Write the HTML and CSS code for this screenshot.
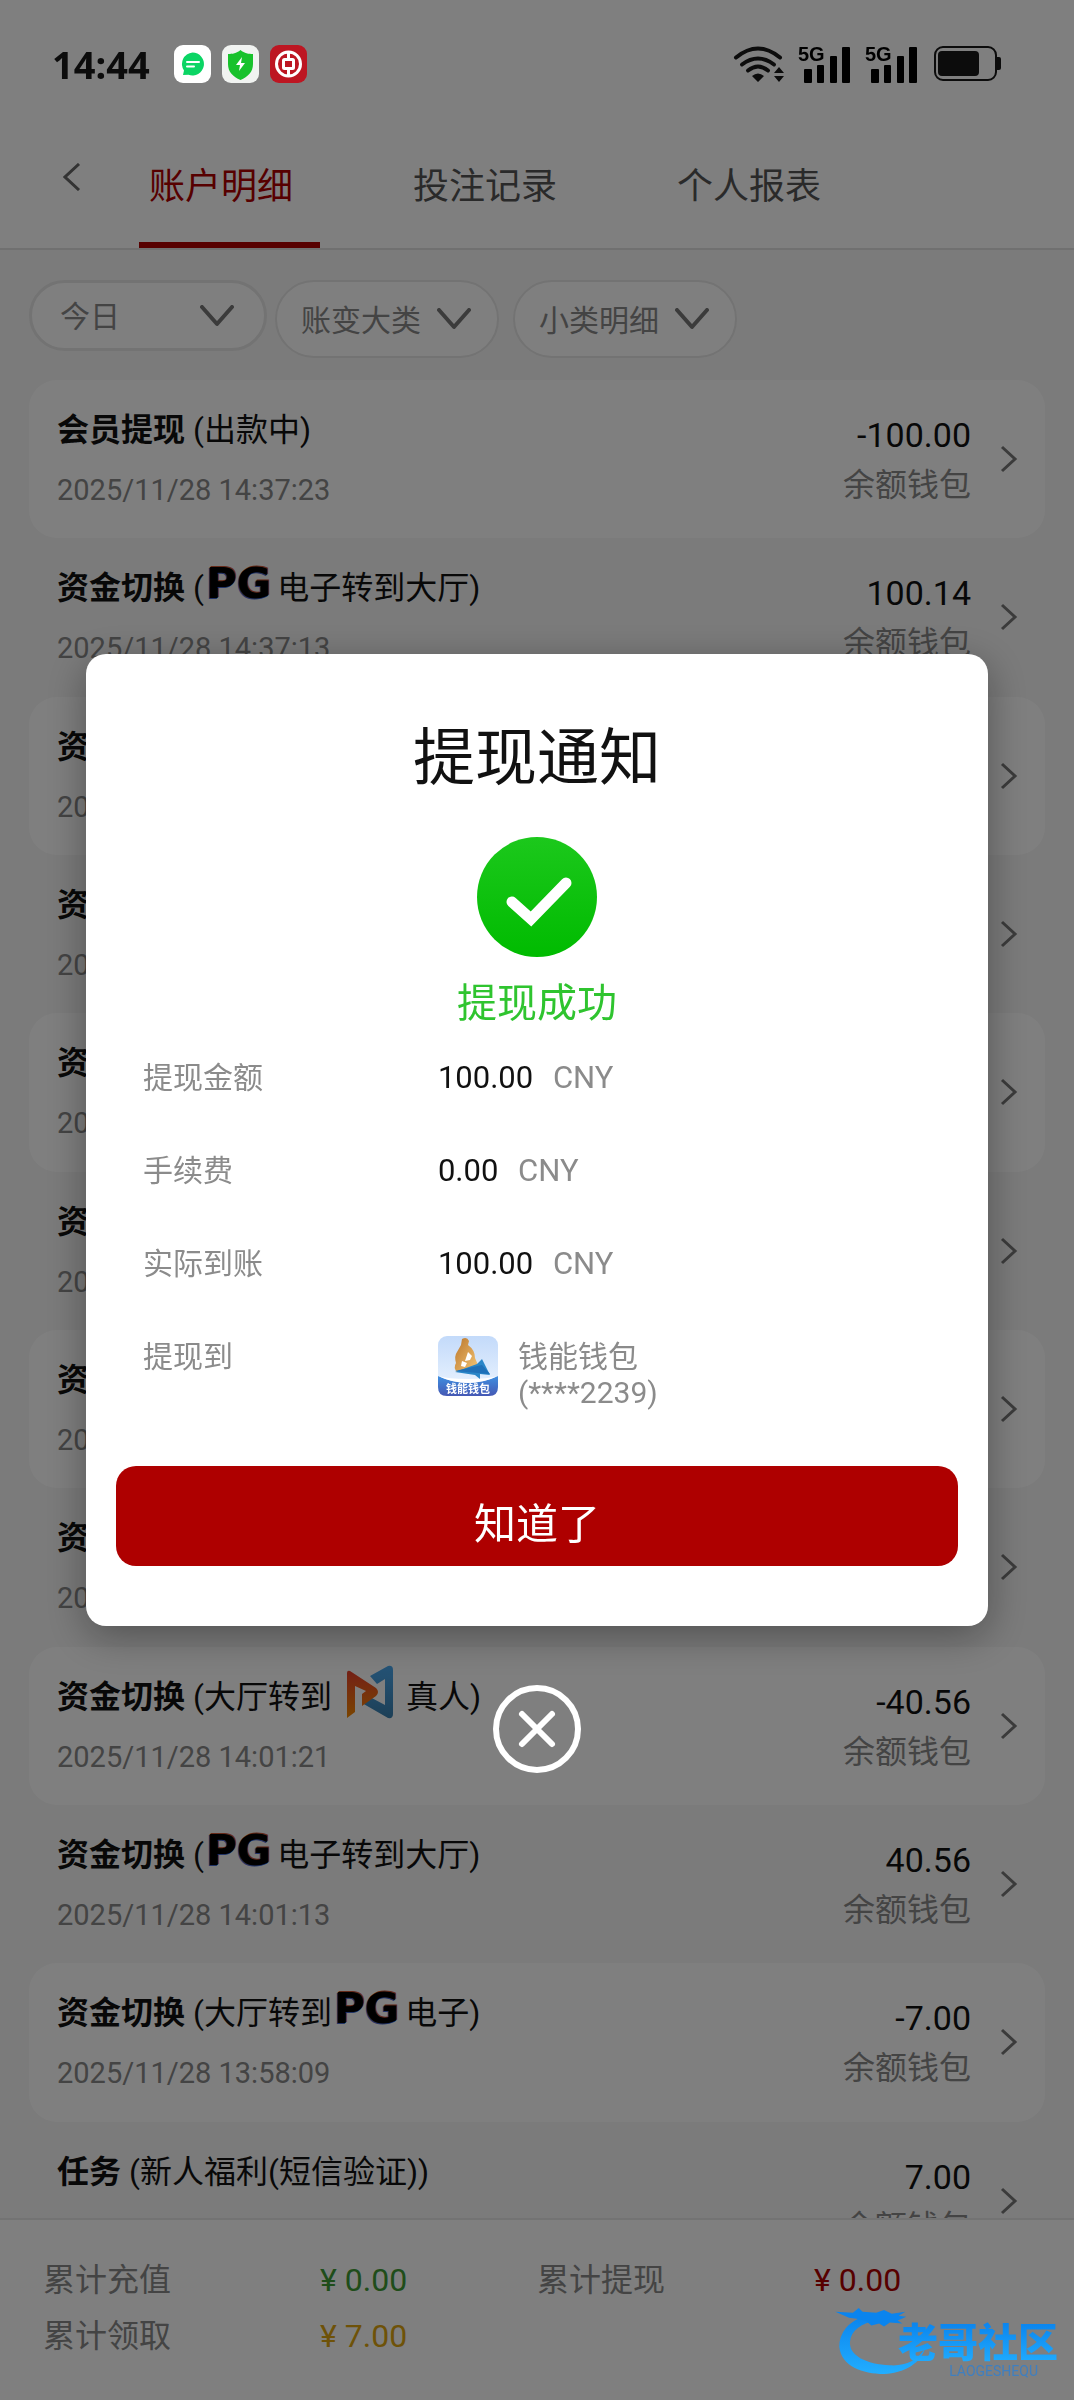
FILE: index.html
```html
<!DOCTYPE html>
<html lang="zh-CN">
<head>
    <meta charset="UTF-8">
    <meta name="viewport" content="width=device-width, initial-scale=1.0">
    <title>账户明细</title>
    <link rel="stylesheet" href="styles.css">
</head>
<body>
    <!-- Shared icons -->
    <svg width="0" height="0" class="sprite" aria-hidden="true">
        <symbol id="icon-right" viewBox="0 0 18 28"><path d="M2 2l13 12L2 26" fill="none" stroke="currentColor" stroke-width="3"/></symbol>
        <symbol id="icon-down" viewBox="0 0 34 22"><path d="M2 2l15 17L32 2" fill="none" stroke="currentColor" stroke-width="4" stroke-linejoin="round" stroke-linecap="round"/></symbol>
        <symbol id="icon-bars" viewBox="0 0 54 40">
            <rect x="6" y="25" width="8" height="14" rx="1"/>
            <rect x="19" y="21" width="7" height="18" rx="1"/>
            <rect x="32" y="12" width="7" height="27" rx="1"/>
            <rect x="44" y="3" width="8" height="36" rx="1"/>
        </symbol>
    </svg>

    <div class="app">
        <!-- Status bar -->
        <div class="status-bar">
            <span class="time">14:44</span>
            <div class="status-apps">
                <svg width="37" height="38" viewBox="0 0 37 38">
                    <rect width="37" height="38" rx="9" fill="#fff"/>
                    <path d="M18.500 7.500a11.500 11.500 0 1 1-4 22.300L9 30l1-4.500a11.500 11.500 0 0 1 8.500-18z" fill="#0bd564"/>
                    <path d="M13 17h12M13 21.500h7" stroke="#fff" stroke-width="2" stroke-linecap="round"/>
                </svg>
                <svg width="37" height="38" viewBox="0 0 37 38">
                    <rect width="37" height="38" rx="9" fill="#f1f3f1"/>
                    <path d="M18.500 5c4 3.500 8 4 12.500 4v10c0 8-5 12.500-12.500 16C11 31.500 6 27 6 19V9c4.500 0 8.500-.5 12.500-4z" fill="#18c22c"/>
                    <path d="M20 12l-6 8h4l-1 6 6-8h-4z" fill="#fff"/>
                </svg>
                <svg width="37" height="38" viewBox="0 0 37 38">
                    <rect width="37" height="38" rx="9" fill="#bd1622"/>
                    <circle cx="18.500" cy="19" r="12" fill="none" stroke="#fff" stroke-width="3"/>
                    <rect x="13.500" y="14.500" width="10" height="9" rx="1" fill="none" stroke="#fff" stroke-width="3"/>
                    <path d="M18.500 6v8M18.500 24v8" stroke="#fff" stroke-width="3"/>
                </svg>
            </div>
            <div class="status-icons">
                <svg width="52" height="38" viewBox="0 0 52 38">
                    <g fill="none" stroke="#0c0c0c" stroke-width="4" stroke-linecap="round">
                        <path d="M3 12.500q22-18 44 0"/>
                        <path d="M9 19.500q16-12 32 0"/>
                        <path d="M15 25.500q10-8 20 0"/>
                    </g>
                    <path d="M25 37l-6-6q6-5 12 0zM46 22l5 6H41zM46 37l5-6H41z" fill="#0c0c0c"/>
                </svg>
                <svg width="54" height="40"><text x="0" y="17" class="signal-text">5G</text><use href="#icon-bars"/></svg>
                <svg width="54" height="40"><text x="0" y="17" class="signal-text">5G</text><use href="#icon-bars"/></svg>
                <svg class="battery" width="68" height="36" viewBox="0 0 68 36">
                    <rect x="1" y="1" width="61" height="33" rx="8" fill="none" stroke="#0c0c0c" stroke-width="2"/>
                    <rect x="4" y="5" width="41" height="25" rx="4" fill="#0c0c0c"/>
                    <path d="M63 11h2q2 0 2 2v9q0 2-2 2h-2z" fill="#0c0c0c"/>
                </svg>
            </div>
        </div>

        <!-- Tabs -->
        <header class="header">
            <button type="button" class="back" aria-label="返回">
                <svg width="18" height="28" viewBox="0 0 18 28"><path d="M16 1L2 14l14 13" fill="none" stroke="currentColor" stroke-width="3"/></svg>
            </button>
            <nav class="tabs">
                <a href="#detail" class="tab active">账户明细</a>
                <a href="#bets" class="tab">投注记录</a>
                <a href="#report" class="tab">个人报表</a>
            </nav>
        </header>

        <!-- Filters -->
        <div class="filters">
            <div class="filter filter-date">
                <select aria-label="日期"><option>今日</option></select>
                <svg width="34" height="22"><use href="#icon-down"/></svg>
            </div>
            <div class="filter">
                <select aria-label="账变大类"><option>账变大类</option></select>
                <svg width="34" height="22"><use href="#icon-down"/></svg>
            </div>
            <div class="filter filter-last">
                <select aria-label="小类明细"><option>小类明细</option></select>
                <svg width="34" height="22"><use href="#icon-down"/></svg>
            </div>
        </div>

        <!-- Records -->
        <main class="list-wrap">
            <ul class="list">
                <li class="record">
                    <div class="info"><p class="name"><b>会员提现</b>(出款中)</p><time>2025/11/28 14:37:23</time></div>
                    <div class="money"><span class="amount">-100.00</span><span class="wallet">余额钱包</span></div>
                    <svg class="arrow" width="18" height="28"><use href="#icon-right"/></svg>
                </li>
                <li class="record">
                    <div class="info"><p class="name"><b>资金切换</b>(<span class="pg">PG</span>电子转到大厅)</p><time>2025/11/28 14:37:13</time></div>
                    <div class="money"><span class="amount">100.14</span><span class="wallet">余额钱包</span></div>
                    <svg class="arrow" width="18" height="28"><use href="#icon-right"/></svg>
                </li>
                <li class="record">
                    <div class="info"><p class="name"><b>资金切换</b></p><time>2025/11/28</time></div>
                    <svg class="arrow" width="18" height="28"><use href="#icon-right"/></svg>
                </li>
                <li class="record">
                    <div class="info"><p class="name"><b>资金切换</b></p><time>2025/11/28</time></div>
                    <svg class="arrow" width="18" height="28"><use href="#icon-right"/></svg>
                </li>
                <li class="record">
                    <div class="info"><p class="name"><b>资金切换</b></p><time>2025/11/28</time></div>
                    <svg class="arrow" width="18" height="28"><use href="#icon-right"/></svg>
                </li>
                <li class="record">
                    <div class="info"><p class="name"><b>资金切换</b></p><time>2025/11/28</time></div>
                    <svg class="arrow" width="18" height="28"><use href="#icon-right"/></svg>
                </li>
                <li class="record">
                    <div class="info"><p class="name"><b>资金切换</b></p><time>2025/11/28</time></div>
                    <svg class="arrow" width="18" height="28"><use href="#icon-right"/></svg>
                </li>
                <li class="record">
                    <div class="info"><p class="name"><b>资金切换</b></p><time>2025/11/28</time></div>
                    <svg class="arrow" width="18" height="28"><use href="#icon-right"/></svg>
                </li>
                <li class="record">
                    <div class="info">
                        <p class="name"><b>资金切换</b>(大厅转到<svg class="live-logo" width="48" height="54" viewBox="0 0 48 54">
                            <defs>
                                <linearGradient id="live-red" x1="0" y1="0" x2="0" y2="1"><stop offset="0" stop-color="#e8402c"/><stop offset="1" stop-color="#f58a00"/></linearGradient>
                                <linearGradient id="live-blue" x1="0" y1="0" x2="0" y2="1"><stop offset="0" stop-color="#4aa8ee"/><stop offset="1" stop-color="#3a7fae"/></linearGradient>
                            </defs>
                            <path d="M24 11L42 1q5-1 5 4v44q0 5-5 4L16 38l6-7 17 9V14l-8 5z" fill="url(#live-blue)"/>
                            <path d="M1 8q0-3 3-2l26 17q4 4 0 8L16 41V29l4-3-11-5v26l-8 6z" fill="url(#live-red)"/>
                        </svg>真人)</p>
                        <time>2025/11/28 14:01:21</time>
                    </div>
                    <div class="money"><span class="amount">-40.56</span><span class="wallet">余额钱包</span></div>
                    <svg class="arrow" width="18" height="28"><use href="#icon-right"/></svg>
                </li>
                <li class="record">
                    <div class="info"><p class="name"><b>资金切换</b>(<span class="pg">PG</span>电子转到大厅)</p><time>2025/11/28 14:01:13</time></div>
                    <div class="money"><span class="amount">40.56</span><span class="wallet">余额钱包</span></div>
                    <svg class="arrow" width="18" height="28"><use href="#icon-right"/></svg>
                </li>
                <li class="record">
                    <div class="info"><p class="name"><b>资金切换</b>(大厅转到<span class="pg">PG</span>电子)</p><time>2025/11/28 13:58:09</time></div>
                    <div class="money"><span class="amount">-7.00</span><span class="wallet">余额钱包</span></div>
                    <svg class="arrow" width="18" height="28"><use href="#icon-right"/></svg>
                </li>
                <li class="record">
                    <div class="info"><p class="name"><b>任务</b>(新人福利(短信验证))</p></div>
                    <div class="money"><span class="amount">7.00</span><span class="wallet">余额钱包</span></div>
                    <svg class="arrow" width="18" height="28"><use href="#icon-right"/></svg>
                </li>
            </ul>
        </main>

        <!-- Totals -->
        <footer class="totals">
            <dl>
                <div><dt>累计充值</dt><dd class="green">¥ 0.00</dd></div>
                <div><dt>累计提现</dt><dd class="red">¥ 0.00</dd></div>
                <div><dt>累计领取</dt><dd class="gold">¥ 7.00</dd></div>
            </dl>
        </footer>
    </div>

    <!-- Withdrawal notice -->
    <div class="overlay">
        <section class="modal" role="dialog" aria-labelledby="modal-title">
            <h2 id="modal-title">提现通知</h2>
            <svg class="check" width="120" height="120" viewBox="0 0 120 120">
                <defs><linearGradient id="check-fill" x1="0" y1="0" x2="0" y2="1"><stop offset="0" stop-color="#1cc81c"/><stop offset="1" stop-color="#00bb00"/></linearGradient></defs>
                <circle cx="60" cy="60" r="60" fill="url(#check-fill)"/>
                <path d="M35 65l19 17 35-36" fill="none" stroke="#fff" stroke-width="11" stroke-linecap="round" stroke-linejoin="miter"/>
            </svg>
            <p class="result">提现成功</p>
            <dl class="details">
                <div><dt>提现金额</dt><dd>100.00 <span class="unit">CNY</span></dd></div>
                <div><dt>手续费</dt><dd>0.00 <span class="unit">CNY</span></dd></div>
                <div><dt>实际到账</dt><dd>100.00 <span class="unit">CNY</span></dd></div>
                <div>
                    <dt>提现到</dt>
                    <dd class="target">
                        <svg width="60" height="60" viewBox="0 0 60 60">
                            <defs>
                                <linearGradient id="w-sky" x1="0" y1="0" x2="0" y2="1"><stop offset="0" stop-color="#c3dafa"/><stop offset="1" stop-color="#eef6ff"/></linearGradient>
                                <linearGradient id="w-sea" x1="0" y1="0" x2="0" y2="1"><stop offset="0" stop-color="#3f8fe0"/><stop offset="1" stop-color="#4558b4"/></linearGradient>
                                <linearGradient id="w-gold" x1="0" y1="0" x2="1" y2="1"><stop offset="0" stop-color="#b9752b"/><stop offset="1" stop-color="#f6c878"/></linearGradient>
                            </defs>
                            <rect width="60" height="60" rx="9" fill="url(#w-sky)"/>
                            <path d="M0 40q30 14 60 0v11q0 9-9 9H9q-9 0-9-9z" fill="url(#w-sea)"/>
                            <path d="M0 40q30 14 60 0-10 3-30 3T0 40z" fill="#fff"/>
                            <path d="M24 3q5-3 7 2l-1 4q7 5 7 13l3 7-21 7q-4-4-1-9-2-7 1-11l4-7z" fill="url(#w-gold)"/>
                            <path d="M30 16l4 4-2 4-5 1zM24 25l5 2-2 4-4-1z" fill="#fff"/>
                            <path d="M39 28l5-5 8 16-10-1v5l-5-4-20-3z" fill="#2a86c8"/>
                            <path d="M17 35l27-6 8 9z" fill="#1f70b8"/>
                            <text x="30" y="57" text-anchor="middle" class="wallet-label">钱能钱包</text>
                        </svg>
                        <span>钱能钱包<br>(****2239)</span>
                    </dd>
                </div>
            </dl>
            <button type="button" class="confirm">知道了</button>
        </section>
        <button type="button" class="close" aria-label="关闭">
            <svg width="88" height="90" viewBox="0 0 88 90">
                <circle cx="44" cy="45" r="41" fill="none" stroke="#fff" stroke-width="6"/>
                <path d="M29 30l30 30M59 30L29 60" stroke="#fff" stroke-width="6" stroke-linecap="round"/>
            </svg>
        </button>
    </div>

    <!-- Community mark -->
    <div class="watermark">
        <svg width="100" height="70" viewBox="0 0 100 72">
            <defs><linearGradient id="mark-fill" x1="0" y1="0" x2="0" y2="1"><stop offset="0" stop-color="#0a84ee"/><stop offset="1" stop-color="#22aeff"/></linearGradient></defs>
            <path d="M30 10Q4 20 4 42c2 20 24 28 46 28 22-1 38-12 42-26-8 12-20 18-36 17-24-1-42-10-41-24 1-12 12-19 26-22z" fill="url(#mark-fill)"/>
            <path d="M0 6l18 1 6-5 4 4 14 1 8-3 8 4 14-2-7 4 8 1-9 4 5 3-13-1-6 4-5-3-8 2-6-5-9-2-8-1z" fill="#0a84ee"/>
        </svg>
        <div class="mark-text"><strong>老哥社区</strong><small>LAOGESHEQU</small></div>
    </div>
</body>
</html>
```
FILE: styles.css
```css
* {
    box-sizing: border-box;
}

body {
    margin: 0;
    font-family: Roboto, "Noto Sans CJK SC", sans-serif;
    font-size: 32px;
    color: #111;
    background: #fff;
}

p, h2, ul, dl, dd {
    margin: 0;
    padding: 0;
}

button, select {
    font: inherit;
    border: none;
    background: none;
}

.sprite {
    position: absolute;
}

.app {
    display: flex;
    flex-direction: column;
    height: 100vh;
    background: #f7f7f7;
}

/* Status bar */
.status-bar {
    position: relative;
    z-index: 3;
    display: flex;
    align-items: center;
    height: 120px;
    padding: 8px 72px 0 52px;
    color: #0c0c0c;
}

.app::before {
    content: "";
    position: absolute;
    width: 100%;
    height: 120px;
    background: #fff;
}

.time {
    width: 122px;
    font-family: "Noto Sans", sans-serif;
    font-size: 38px;
    font-weight: 700;
}

.status-apps {
    display: flex;
    gap: 11px;
}

.status-icons {
    display: flex;
    align-items: center;
    gap: 13px;
    margin-left: auto;
}

.battery {
    margin-left: 2px;
}

.signal-text {
    font-family: "Liberation Sans", sans-serif;
    font-size: 20px;
    font-weight: 700;
}

/* Tabs */
.header {
    display: flex;
    flex-shrink: 0;
    height: 130px;
    background: #fff;
    border-bottom: 2px solid #e0e0e0;
}

.back {
    width: 89px;
    padding: 0 0 8px 63px;
    color: #666;
    text-align: left;
}

.tabs {
    display: flex;
}

.tab {
    position: relative;
    display: flex;
    align-items: center;
    justify-content: center;
    width: 264px;
    padding-bottom: 2px;
    font-size: 36px;
    color: #555;
    text-decoration: none;
}

.tab.active {
    color: #ae0000;
}

.tab.active::after {
    content: "";
    position: absolute;
    bottom: 0;
    left: 50px;
    right: 33px;
    height: 6px;
    background: #ae0000;
}

/* Filters */
.filters {
    display: flex;
    align-items: flex-start;
    gap: 8px;
    padding: 30px 29px 22px;
}

.filter {
    display: grid;
    align-items: center;
    width: 224px;
    height: 78px;
    border: 2px solid #e6e6e6;
    border-radius: 39px;
    background: #fff;
}

.filter-date {
    width: 238px;
    height: 71px;
    border-width: 3px;
}

.filter-last {
    margin-left: 6px;
}

.filter select {
    grid-area: 1 / 1;
    width: 100%;
    height: 100%;
    padding: 2px 24px 0;
    font-size: 30px;
    color: #888;
    appearance: none;
}

.filter-date select {
    padding: 2px 28px 0;
}

.filter svg {
    grid-area: 1 / 1;
    justify-self: end;
    margin-right: 26px;
    color: #777;
    pointer-events: none;
}

.filter-date svg {
    margin-right: 30px;
}

/* Records */
.list-wrap {
    flex: 1;
    min-height: 0;
    overflow: hidden;
    padding: 0 29px;
}

.list {
    display: grid;
    grid-template-rows: repeat(12, 1fr);
    height: 1900px;
    list-style: none;
}

.record {
    display: flex;
    padding: 0 27px 0 28px;
    border-radius: 28px;
}

.record:nth-child(odd) {
    background: #fff;
}

.info {
    flex: 1;
    padding-top: 26px;
}

.name {
    display: flex;
    align-items: center;
    height: 48px;
    line-height: 48px;
    white-space: nowrap;
}

.name b {
    margin-right: 8px;
}

.info time {
    display: block;
    margin-top: 12px;
    font-size: 29px;
    line-height: 48px;
    color: #888;
}

.money {
    display: flex;
    flex-direction: column;
    align-items: flex-end;
    padding-top: 30px;
}

.amount {
    font-size: 34px;
    line-height: 50px;
}

.wallet {
    line-height: 50px;
    color: #888;
}

.arrow {
    align-self: center;
    margin-left: 29px;
    color: #777;
}

.pg {
    margin: 0 6px 8px 2px;
    font-family: "DejaVu Sans", sans-serif;
    font-size: 42px;
    font-weight: 700;
    line-height: 1;
    color: #000;
    text-shadow: -1px 1px #4466cc, 1px -1px #cc5533;
}

.live-logo {
    margin: 0 12px 10px 14px;
}

/* Totals */
.totals {
    min-height: 182px;
    padding: 32px 43px;
    background: #fff;
    border-top: 2px solid #e6e6e6;
}

.totals dl {
    display: grid;
    grid-template-columns: 1fr 1fr;
}

.totals dl > div {
    display: flex;
    line-height: 56px;
}

.totals dt {
    width: 277px;
    color: #888;
}

.green {
    color: #3f9a35;
}

.red {
    color: #ae0000;
}

.gold {
    color: #dca410;
}

/* Withdrawal notice */
.overlay {
    position: fixed;
    inset: 0;
    z-index: 2;
    display: flex;
    flex-direction: column;
    align-items: center;
    justify-content: center;
    gap: 58px;
    padding-top: 28px;
    background: rgba(0, 0, 0, 0.5);
}

.modal {
    width: 84%;
    padding: 60px 30px;
    border-radius: 20px;
    background: #fff;
    text-align: center;
    box-shadow: 0 10px 40px rgba(0, 0, 0, 0.35);
}

.modal h2 {
    font-size: 62px;
    font-weight: 400;
    line-height: 90px;
}

.check {
    display: block;
    margin: 33px auto 17px;
}

.result {
    font-size: 40px;
    line-height: 60px;
    color: #2fc42f;
}

.details {
    padding: 0 27px;
    font-size: 30px;
    line-height: 36px;
    text-align: left;
}

.details > div {
    display: flex;
    min-height: 93px;
    padding-top: 26px;
}

.details dt {
    width: 295px;
    color: #8b8b8b;
}

.details dd {
    font-size: 31px;
}

.unit {
    margin-left: 12px;
    color: #8b8b8b;
}

.details .target {
    display: flex;
    gap: 20px;
    font-size: 30px;
    color: #8b8b8b;
}

.target svg {
    margin-top: -3px;
}

.wallet-label {
    font-size: 11px;
    font-weight: 700;
    fill: #fff;
}

.confirm {
    display: block;
    width: 100%;
    height: 100px;
    margin-top: 55px;
    padding: 8px 0 0;
    border-radius: 20px;
    font-size: 42px;
    color: #fff;
    background: #ae0000;
}

.close {
    display: block;
    padding: 0;
    line-height: 0;
}

/* Community mark */
.watermark {
    position: fixed;
    right: 16px;
    bottom: 24px;
    z-index: 3;
    display: flex;
}

.mark-text {
    display: flex;
    flex-direction: column;
    align-items: flex-end;
    margin: 16px 0 0 -36px;
}

.mark-text strong {
    font-size: 40px;
    line-height: 44px;
    font-weight: 900;
    color: transparent;
    background: linear-gradient(#0a84ee, #22aeff);
    background-clip: text;
}

.mark-text small {
    padding-right: 20px;
    font-size: 14px;
    line-height: 10px;
    color: #3f7fc0;
}
```
